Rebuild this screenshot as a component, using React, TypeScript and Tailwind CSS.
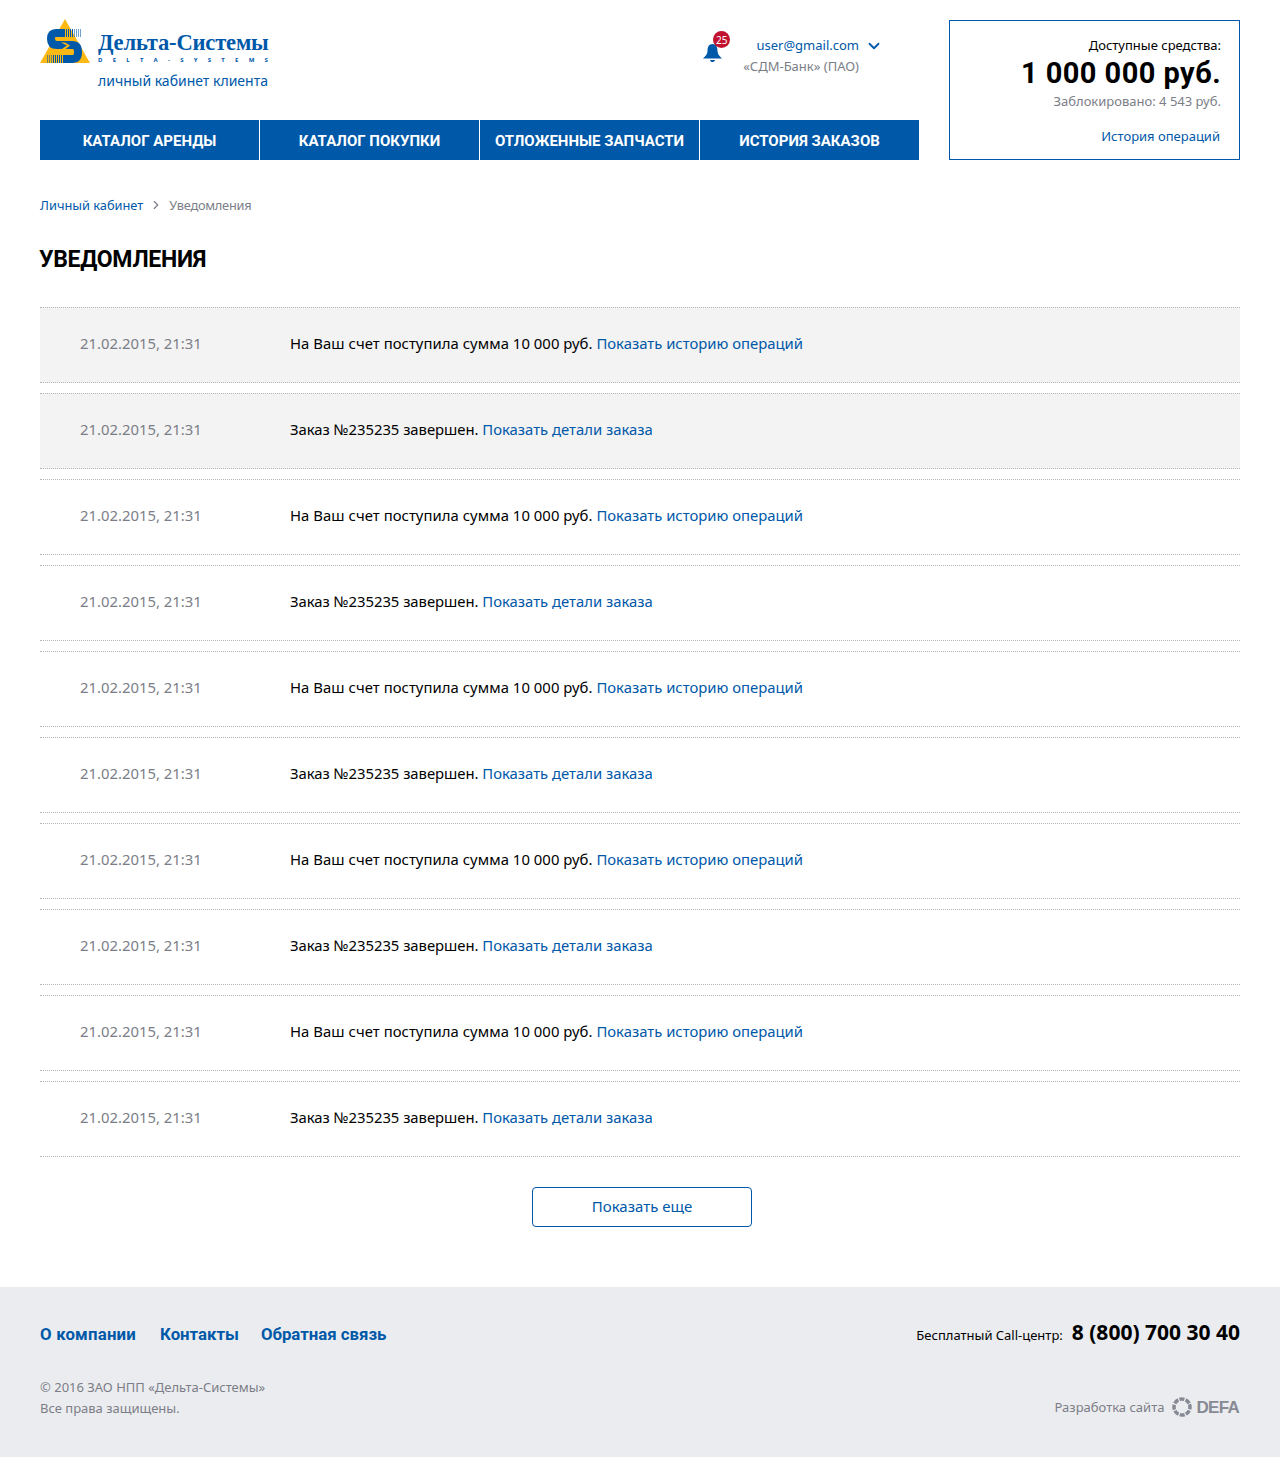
import React from 'react';
import { ChevronDown, ChevronRight } from 'lucide-react';

const rows = [0, 1, 2, 3, 4, 5, 6, 7, 8, 9];

function Logo() {
  return (
    <svg width="50" height="44" viewBox="0 0 50 44" className="mt-[-1px] shrink-0">
      <polygon points="25,0 50,44 0,44" fill="#fcb814" />
      <g stroke="#0058a9" strokeWidth="1">
        <path d="M24.5 10V18M26.5 10V18M28.5 10V18M30.5 10V18M32.5 10V18" />
        <path d="M34.5 10V18M36.5 10V18M38.5 10V18M40.5 10V18" opacity="0.55" />
        <path d="M13.5 36V44M15.5 36V44M17.5 36V44M19.5 36V44M21.5 36V44M23.5 36V44" />
        <path d="M7.5 36V44M9.5 36V44M11.5 36V44" opacity="0.55" />
      </g>
      <path d="M24 14H16Q11 14 11 20Q11 26 17 26H32Q38 26 38 33Q38 40 32 40H24" fill="none" stroke="#0058a9" strokeWidth="8" />
      <path d="M21 23.5L27 26.5L21 30.5H25L30 26.5L25 23.5Z" fill="#fcb814" />
    </svg>
  );
}

function Bell() {
  return (
    <svg width="19" height="20" viewBox="0 0 19 20" className="block">
      <path d="M9.5 1C6 1 4.6 3.8 4.6 7C4.6 10.5 3 13 0 15.5H19C16 13 14.4 10.5 14.4 7C14.4 3.8 13 1 9.5 1Z" fill="#0058a9" />
      <path d="M7 17H12C11.7 18.4 10.7 19 9.5 19C8.3 19 7.3 18.4 7 17Z" fill="#0058a9" />
    </svg>
  );
}

function DefaMark() {
  return (
    <svg width="20" height="20" viewBox="0 0 20 20" className="shrink-0">
      <circle cx="10" cy="10" r="8" fill="none" stroke="#878a94" strokeWidth="3.5" strokeDasharray="5 1.28" transform="rotate(-20 10 10)" />
    </svg>
  );
}

export default function App() {
  return (
    <div className="w-[1280px] min-h-[1457px] bg-white font-['Noto_Sans',sans-serif] text-black">
      <header className="flex justify-between px-10 pt-5">
        <div className="w-[879px]">
          <div className="flex h-[80px] justify-between">
            <div className="w-[228px]">
              <div className="flex">
                <Logo />
                <div className="ml-2 w-[170px] pt-[11px]">
                  <div className="font-['Liberation_Serif',serif] font-bold text-[22.6px] leading-[24px] tracking-[-0.2px] text-[#0058a9] whitespace-nowrap">Дельта-Системы</div>
                  <div className="mt-px flex justify-between text-[6px] leading-[8px] font-bold text-[#0058a9]">
                    {'DELTA-SYSTEMS'.split('').map((c, i) => <span key={i}>{c}</span>)}
                  </div>
                </div>
              </div>
              <div className="ml-[58px] mt-[7px] text-[14px] leading-[20px] text-[#0058a9] whitespace-nowrap">личный кабинет клиента</div>
            </div>
            <div className="flex pt-[15px] mr-[60px]">
              <div className="relative mt-[8px] mr-[21px] h-[20px]">
                <Bell />
                <span className="absolute left-[10px] top-[-12px] flex h-[17px] w-[17px] items-center justify-center rounded-full bg-[#c1122f] text-[10px] leading-none text-white">25</span>
              </div>
              <div className="text-right text-[13px] leading-[21px]">
                <div className="flex items-center justify-end text-[#0058a9]">
                  user@gmail.com
                  <ChevronDown size={18} strokeWidth={2.4} className="ml-1.5 mr-[-24px]" />
                </div>
                <div className="text-[#7b7e87]">«СДМ-Банк» (ПАО)</div>
              </div>
            </div>
          </div>
          <nav className="mt-5 grid h-10 grid-cols-4 gap-px">
            {['КАТАЛОГ АРЕНДЫ', 'КАТАЛОГ ПОКУПКИ', 'ОТЛОЖЕННЫЕ ЗАПЧАСТИ', 'ИСТОРИЯ ЗАКАЗОВ'].map((t) => (
              <a key={t} className="flex items-center justify-center bg-[#0058a9] pt-[2px] font-['Roboto',sans-serif] text-[15px] font-bold text-white whitespace-nowrap">{t}</a>
            ))}
          </nav>
        </div>
        <aside className="h-[140px] w-[291px] border border-[#0058a9] pr-[18px] pt-[14px] text-right">
          <div className="text-[13px] leading-[20px]">Доступные средства:</div>
          <div className="mt-[3px] font-['Roboto',sans-serif] text-[29px] font-bold leading-[30px] tracking-[0.45px]">1 000 000 руб.</div>
          <div className="mt-[3px] text-[13px] leading-[20px] text-[#7b7e87]">Заблокировано: 4 543 руб.</div>
          <a className="mt-[15px] mr-px block text-[13px] leading-[20px] text-[#0058a9]">История операций</a>
        </aside>
      </header>

      <main className="px-10">
        <div className="mt-[35px] flex items-center text-[12.8px] leading-5">
          <a className="text-[#0058a9]">Личный кабинет</a>
          <ChevronRight size={14} className="mx-[6px] text-[#7b7e87]" />
          <span className="tracking-[-0.25px] text-[#7b7e87]">Уведомления</span>
        </div>
        <h1 className="mt-[30px] ml-[-1px] font-['Roboto',sans-serif] text-[23px] font-bold leading-[30px] tracking-[-0.3px]">УВЕДОМЛЕНИЯ</h1>
        <div className="mt-[32px] flex flex-col gap-[10px]">
          {rows.map((i) => (
            <div key={i} className={`flex h-[76px] items-center border-y border-dotted border-[#b5b5b5] pb-1 text-[14.85px] ${i < 2 ? 'bg-[#f3f3f3]' : ''}`}>
              <div className="w-[250px] pl-10 text-[#7b7e87]">21.02.2015, 21:31</div>
              {i % 2 === 0 ? (
                <div><span className="tracking-[0.05px]">На Ваш счет поступила сумма 10 000 руб.</span> <a className="text-[#0058a9]">Показать историю операций</a></div>
              ) : (
                <div><span className="tracking-[-0.04px]">Заказ №235235 завершен.</span> <a className="text-[#0058a9]">Показать детали заказа</a></div>
              )}
            </div>
          ))}
        </div>
        <div className="mt-[30px] flex justify-center pl-1">
          <button className="h-10 w-[220px] rounded border border-[#0058a9] pb-[2px] text-[15px] text-[#0058a9]">Показать еще</button>
        </div>
      </main>

      <footer className="mt-[60px] h-[170px] bg-[#ebecef] px-10 pt-[30px]">
        <div className="flex items-center justify-between">
          <div className="flex font-['Roboto',sans-serif] text-[16.8px] font-bold leading-6 text-[#0058a9]">
            <a className="mr-6 tracking-[0.2px]">О компании</a>
            <a className="mr-[22px]">Контакты</a>
            <a>Обратная связь</a>
          </div>
          <div className="mb-[2px] flex items-baseline text-[13px]">
            Бесплатный Call-центр:
            <span className="ml-[9px] text-[21px] font-bold">8 (800) 700 30 40</span>
          </div>
        </div>
        <div className="mt-[26px] flex items-start justify-between text-[13px] leading-[21px] text-[#7b7e87]">
          <div>
            <div>© 2016 ЗАО НПП «Дельта-Системы»</div>
            <div>Все права защищены.</div>
          </div>
          <div className="mt-[20px] mr-px flex items-center">
            Разработка сайта
            <span className="ml-2"><DefaMark /></span>
            <span className="ml-[4px] font-['Liberation_Sans',sans-serif] text-[17px] font-bold tracking-[-0.7px] text-[#878a94]">DEFA</span>
          </div>
        </div>
      </footer>
    </div>
  );
}
